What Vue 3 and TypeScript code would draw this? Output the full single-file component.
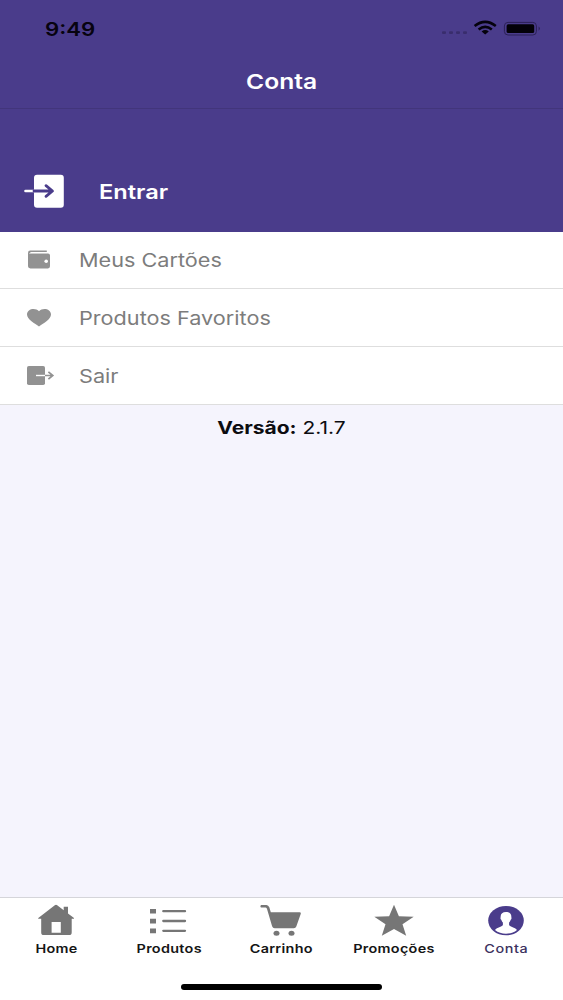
<script setup lang="ts">
type IconName = 'wallet' | 'heart' | 'exit' | 'home' | 'list' | 'cart' | 'star' | 'user'

interface Entry {
  label: string
  icon: IconName
}

const menu: Entry[] = [
  { label: 'Meus Cartões', icon: 'wallet' },
  { label: 'Produtos Favoritos', icon: 'heart' },
  { label: 'Sair', icon: 'exit' },
]

const tabs: Entry[] = [
  { label: 'Home', icon: 'home' },
  { label: 'Produtos', icon: 'list' },
  { label: 'Carrinho', icon: 'cart' },
  { label: 'Promoções', icon: 'star' },
  { label: 'Conta', icon: 'user' },
]
const activeTab = 'Conta'
</script>

<template>
  <div class="screen">
    <header class="top">
      <div class="status">
        <span class="time wide">9:49</span>
        <svg class="indicators" width="102" height="20" viewBox="0 0 102 20">
          <g fill="#1c1338" opacity="0.35">
            <rect x="2" y="12.3" width="4" height="2.6" rx="1" />
            <rect x="9" y="12.3" width="4" height="2.6" rx="1" />
            <rect x="16" y="12.3" width="4" height="2.6" rx="1" />
            <rect x="23" y="12.3" width="4" height="2.6" rx="1" />
          </g>
          <g fill="none" stroke="#05020d" stroke-width="2.6">
            <path d="M34.6 7Q45.2-1.2 55.8 7" />
            <path d="M38.6 10.4Q45.2 5.2 51.8 10.4" />
          </g>
          <path d="M41.6 12.4Q45.2 9.8 48.8 12.4L45.2 15.6Z" fill="#05020d" />
          <rect x="64.4" y="3.4" width="32" height="12.6" rx="3.6" fill="none" stroke="#2b2056" stroke-width="1" />
          <rect x="66.6" y="5.3" width="27.6" height="8.8" rx="1.6" fill="#030108" />
          <path d="M98.6 7.6q2.6 2 0 4.2z" fill="#2b2056" />
        </svg>
      </div>
      <h1 class="title"><span class="wide">Conta</span></h1>
      <button class="login">
        <svg width="42" height="36" viewBox="0 0 42 36">
          <rect x="10" y="1.7" width="29.8" height="33" rx="3" fill="#fff" />
          <path d="M1.5 18H10" stroke="#fff" stroke-width="2.6" stroke-linecap="round" />
          <path d="M10 18H28M22 12.7L28.5 18L22 23.3" fill="none" stroke="#4a3c8b" stroke-width="2.8" stroke-linecap="round" stroke-linejoin="round" />
        </svg>
        <span class="wide">Entrar</span>
      </button>
    </header>

    <main class="content">
      <ul class="menu">
        <li v-for="item in menu" :key="item.label">
          <svg class="menu-icon" width="30" height="24" viewBox="0 0 30 24">
            <template v-if="item.icon === 'wallet'">
              <path d="M4.3 2.6H20.8V4.1H5.5Q4.3 4.2 4.3 5.4H22Q24 5.4 24 7.4V18.3Q24 20.4 22 20.4H4.4Q2 20.4 2 18.3V5Q2 2.6 4.3 2.6Z" fill="#929292" />
              <path d="M3.7 5.6Q4 4.6 5.5 4.6H21" fill="none" stroke="#fff" stroke-width=".9" />
              <circle cx="20.2" cy="13.2" r="1.8" fill="#fff" />
            </template>
            <path v-else-if="item.icon === 'heart'" d="M13 20.5C9 17.7 1 13.5 1 8.6C1 2.4 9.6 1.3 13 5.2C16.4 1.3 25 2.4 25 8.6C25 13.5 17 17.7 13 20.5Z" fill="#929292" />
            <template v-else>
              <rect x="1" y="2" width="18" height="19" rx="1.8" fill="#929292" />
              <path d="M10 11.5H19" stroke="#fff" stroke-width="1.4" />
              <path d="M19 11.5H26M22.4 7.8L26.8 11.5L22.4 15.2" fill="none" stroke="#929292" stroke-width="1.7" />
            </template>
          </svg>
          <span class="wide">{{ item.label }}</span>
        </li>
      </ul>
      <p class="version"><span class="wide"><b>Versão:</b> 2.1.7</span></p>
    </main>

    <footer class="bottom">
      <nav class="tabs">
        <a v-for="tab in tabs" :key="tab.label" class="tab" :class="{ active: tab.label === activeTab }">
          <svg width="42" height="34" viewBox="0 0 42 34" fill="currentColor">
            <path v-if="tab.icon === 'home'" fill-rule="evenodd" d="M21 1.7Q21.6 1.7 22.2 2.2L28.7 7.2V3.7H33V10.5L39 15Q39.4 15.6 38.7 15.8H36.7V29.4Q36.7 32 34 32H8.7Q6.2 32 6.2 29.4V15.8H3.5Q2.7 15.6 3.3 15L19.8 2.2Q20.4 1.7 21 1.7ZM16.6 19V29.7H25.8V19Z" />
            <template v-else-if="tab.icon === 'list'">
              <path d="M3 6H9V10.6H3ZM3 15.8H9V20.4H3ZM3 25.6H9V30.3H3Z" />
              <path d="M16.3 8.2H38M16.3 18H38M16.3 27.8H38" stroke="currentColor" stroke-width="2.3" stroke-linecap="round" />
            </template>
            <template v-else-if="tab.icon === 'cart'">
              <path d="M1 2H6.5Q8.4 2.2 9.3 4.2L10.8 9.2H39.7Q41.2 9.4 40.7 11L36.3 23.6Q35.7 25.3 33.8 25.3H14.6Q12.8 25 12.1 23.2L7.1 6.2Q6.8 4.8 5.6 4.6H1Q-.2 3.3 1 2Z" />
              <ellipse cx="16.5" cy="30.2" rx="3" ry="2.5" />
              <ellipse cx="31.5" cy="30.2" rx="3" ry="2.5" />
            </template>
            <path v-else-if="tab.icon === 'star'" d="M21 1.8L25.9 13.2L40.7 13.8L29.5 21.2L33.2 32.8L21 26L8.8 32.8L12.5 21.2L1.3 13.8L16.1 13.2Z" />
            <template v-else>
              <ellipse cx="21" cy="17.6" rx="17.8" ry="14.7" />
              <path fill="#fff" d="M21 9.1C24.6 9.1 26.7 11 26.3 14.2C26.8 14.6 26.5 16.3 25.7 16.7C25.4 18 24.8 18.7 24.1 19.4V22C25.4 24.3 29.7 24 32 27C29 29.6 25.1 30.7 21 30.7S13 29.6 10 27C12.3 24 16.6 24.3 17.9 22V19.4C17.2 18.7 16.6 18 16.3 16.7C15.5 16.3 15.2 14.6 15.7 14.2C15.3 11 17.4 9.1 21 9.1Z" />
            </template>
          </svg>
          <span class="wide">{{ tab.label }}</span>
        </a>
      </nav>
      <div class="home-bar"></div>
    </footer>
  </div>
</template>

<style>
body {
  margin: 0;
}
</style>

<style scoped>
.screen {
  width: 100%;
  height: 1000px;
  display: flex;
  flex-direction: column;
  overflow: hidden;
  background: #f5f4fd;
  font-family: Inter, "Liberation Sans", sans-serif;
}
.wide {
  display: inline-block;
  white-space: nowrap;
  transform: scaleX(1.2);
  transform-origin: left center;
}
.top {
  height: 231.5px;
  flex: none;
  background: #4a3c8b;
  color: #fff;
}
.status {
  height: 56px;
  display: flex;
  justify-content: space-between;
  align-items: center;
  box-sizing: border-box;
  padding: 1px 21px 0 45px;
}
.time {
  font-size: 18.5px;
  font-weight: 600;
  color: #07030f;
}
.title {
  height: 52px;
  box-sizing: content-box;
  margin: 0;
  border-bottom: 1px solid #42357b;
  display: flex;
  align-items: center;
  justify-content: center;
  font-size: 20.5px;
  font-weight: 600;
}
.title .wide {
  margin-bottom: 2px;
}
.title .wide,
.version .wide,
.tab .wide {
  transform-origin: center;
}
.login {
  display: flex;
  align-items: center;
  gap: 33px;
  margin: 64px 0 0 24px;
  padding: 0;
  border: 0;
  background: none;
  color: inherit;
  font: 600 20px Inter, sans-serif;
}
.login .wide {
  margin-top: 2px;
  transform: scaleX(1.18);
}
.content {
  flex: 1;
}
.menu {
  list-style: none;
  margin: 0;
  padding: 0;
  background: #fff;
}
.menu li {
  box-sizing: border-box;
  height: 57.8px;
  display: flex;
  align-items: center;
  gap: 22.5px;
  padding: 1px 0 0 26px;
  border-bottom: 1.5px solid #dedede;
  font-size: 18.5px;
  color: #7c7c7c;
}
.menu .wide {
  transform: scaleX(1.17);
}
.version {
  margin: 0;
  padding-top: 12px;
  text-align: center;
  font-size: 17.5px;
  line-height: 22px;
  color: #0c0c10;
}
.bottom {
  box-sizing: border-box;
  height: 103px;
  flex: none;
  background: #fff;
  border-top: 1px solid #d5d5da;
}
.tabs {
  display: grid;
  grid-template-columns: repeat(5, 1fr);
  padding-top: 5px;
  height: 79px;
}
.tab {
  display: flex;
  flex-direction: column;
  align-items: center;
  color: #767676;
  font-size: 12px;
  font-weight: 600;
}
.tab svg {
  margin-left: -1px;
}
.tab .wide {
  margin-top: 4px;
  line-height: 16px;
  letter-spacing: 0.25px;
  color: #151515;
}
.tab.active {
  color: #4a3c8b;
}
.tab.active .wide {
  font-weight: 500;
  letter-spacing: 0.5px;
  color: #3b3260;
}
.home-bar {
  width: 201px;
  height: 6px;
  margin: 2px auto 0;
  border-radius: 3px;
  background: #000;
}
</style>
